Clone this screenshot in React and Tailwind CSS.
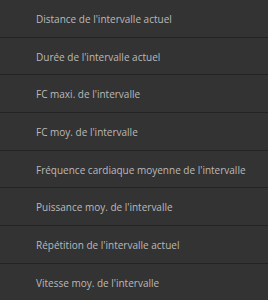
import React from 'react';

const items = [
  "Distance de l'intervalle actuel",
  "Durée de l'intervalle actuel",
  'FC maxi. de l\'intervalle',
  "FC moy. de l'intervalle",
  "Fréquence cardiaque moyenne de l'intervalle",
  "Puissance moy. de l'intervalle",
  "Répétition de l'intervalle actuel",
  "Vitesse moy. de l'intervalle",
];

const App = () => {
  return (
    <div className="w-[268px] h-[300px] overflow-hidden bg-[#333333]" style={{ fontFamily: '"Open Sans", sans-serif' }}>
      {items.map((label) => (
        <div
          key={label}
          className="h-[37.7px] box-border border-b border-[#232323] flex items-center pl-9 pt-[2px] text-[10px] text-[#bababa]"
        >
          {label}
        </div>
      ))}
    </div>
  );
};

export default App;
